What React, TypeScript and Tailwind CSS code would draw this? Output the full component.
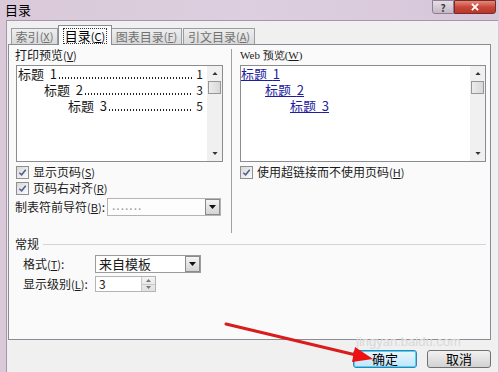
import React from "react";

function Key({ k }: { k: string }) {
  return (
    <span className="text-[11px]">
      (<span className="underline">{k}</span>)
    </span>
  );
}

function Check() {
  return (
    <span className="flex h-[13px] w-[13px] shrink-0 items-center justify-center border border-[#8e8f8f] bg-gradient-to-br from-[#d9d9d9] to-[#fbfbfb]">
      <svg viewBox="0 0 10 10" className="h-[9px] w-[9px]">
        <path d="M1.5 5.2 L4 7.6 L8.6 2" fill="none" stroke="#4b5f92" strokeWidth="1.7" />
      </svg>
    </span>
  );
}

function DropBtn() {
  return (
    <span className="flex h-full w-[15px] shrink-0 items-center justify-center border border-[#8a8a8a] bg-gradient-to-b from-[#f4f4f4] to-[#d4d4d4]">
      <svg viewBox="0 0 7 4" className="h-[4px] w-[7px]">
        <path d="M0 0h7L3.5 4z" fill="#111" />
      </svg>
    </span>
  );
}

function ScrollBar() {
  return (
    <div className="flex h-full w-[15px] shrink-0 flex-col items-center bg-[#f0f0f0]">
      <div className="flex h-[15px] w-full items-center justify-center">
        <svg viewBox="0 0 7 4" className="h-[3px] w-[6px]">
          <path d="M0 4h7L3.5 0z" fill="#333" />
        </svg>
      </div>
      <div className="h-[13px] w-[13px] border border-[#979797] bg-gradient-to-r from-[#ececec] to-[#d8d8d8]" />
      <div className="flex-1" />
      <div className="flex h-[15px] w-full items-center justify-center">
        <svg viewBox="0 0 7 4" className="h-[3px] w-[6px]">
          <path d="M0 0h7L3.5 4z" fill="#333" />
        </svg>
      </div>
    </div>
  );
}

function PrintRow({ indent, level, page }: { indent: string; level: string; page: string }) {
  return (
    <div className={`flex h-[16px] min-w-0 items-center pr-[4px] leading-[16px] ${indent}`}>
      <span className="shrink-0 whitespace-nowrap text-[13px] leading-[16px]">标题&nbsp;&nbsp;{level}</span>
      {/* dotted leader */}
      <span className="mb-[3px] ml-[1px] h-[2px] min-w-0 flex-1 self-end bg-[radial-gradient(circle,#222_0.8px,transparent_1px)] bg-[length:3px_2px]" />
      <span className="shrink-0 pl-[3px] text-[12px] leading-[16px]">{page}</span>
    </div>
  );
}

function WebRow({ indent, level }: { indent: string; level: string }) {
  return (
    <div className={`flex h-[16px] items-center ${indent}`}>
      <span className="whitespace-nowrap text-[13px] leading-[16px] text-[#1e1ea0] underline">标题&nbsp;&nbsp;{level}</span>
    </div>
  );
}

export default function App() {
  return (
    <div className="relative flex h-[372px] w-[499px] flex-col overflow-hidden bg-gradient-to-r from-[#d9c9d9] via-[#ddcfdf] to-[#d7c6da] font-['Noto_Sans_CJK_SC',sans-serif] text-[12px] text-[#1a1a1a]">
      {/* title bar */}
      <div className="flex h-[20px] shrink-0 items-start">
        <span className="pl-[5px] pt-[1px] text-[13px] leading-[17px] text-black">目录</span>
        <div className="ml-auto mr-[3px] flex">
          <span className="flex h-[14px] w-[22px] items-center justify-center rounded-bl-[3px] border border-[#8d7f90] bg-gradient-to-b from-[#e6dfe8] to-[#c3b8c6] text-[10px] font-bold text-[#3b3b3b]">
            ?
          </span>
          <span className="flex h-[14px] w-[42px] items-center justify-center rounded-br-[3px] border border-[#7a2a24] bg-gradient-to-b from-[#e08a7d] via-[#c9473a] to-[#b9362a]">
            <svg viewBox="0 0 10 9" className="h-[8px] w-[10px]">
              <path d="M1.5 1 L8.5 8 M8.5 1 L1.5 8" stroke="#fff" strokeWidth="2" />
            </svg>
          </span>
        </div>
      </div>

      {/* dialog body */}
      <div className="ml-[6px] mr-[1px] flex flex-1 flex-col border-l border-t border-[#a596a8] bg-[#f0f0f0] pl-[1px] pr-[7px]">
        {/* tabs */}
        <div className="mt-[4px] flex h-[19px] items-end pl-[3px]">
          <div className="flex h-[16px] w-[47px] items-center justify-center border border-b-0 border-[#9a9ca3] bg-gradient-to-b from-[#eeeeee] to-[#d9d9d9] text-[#707070]">
            索引<Key k="X" />
          </div>
          <div className="relative z-10 -mb-px flex h-[20px] w-[54px] items-center justify-center border border-b-0 border-[#898c95] bg-[#fbfbfb] text-[13px] text-black">
            <span className="border border-dotted border-[#333] px-[1px] leading-[14px]">
              目录<Key k="C" />
            </span>
          </div>
          <div className="flex h-[16px] w-[70px] items-center justify-center border border-b-0 border-l-0 border-[#9a9ca3] bg-gradient-to-b from-[#eeeeee] to-[#d9d9d9] text-[#707070]">
            图表目录<Key k="F" />
          </div>
          <div className="ml-[1px] flex h-[16px] w-[72px] items-center justify-center border border-b-0 border-[#9a9ca3] bg-gradient-to-b from-[#eeeeee] to-[#d9d9d9] text-[#707070]">
            引文目录<Key k="A" />
          </div>
        </div>

        {/* tab panel */}
        <div className="flex h-[296px] flex-col border border-[#898c95] bg-[#fafafa] pl-[6px] pr-[4px]">
          <div className="flex h-[188px]">
            {/* print preview */}
            <div className="flex w-[208px] flex-col pt-[3px]">
              <div className="h-[14px] leading-[14px]">
                打印预览<Key k="V" />
              </div>
              <div className="ml-[1px] mt-[3px] flex h-[97px] w-[207px] border border-[#8a8c90] bg-white">
                <div className="flex min-w-0 flex-1 flex-col">
                  <PrintRow indent="pl-[1px]" level="1" page="1" />
                  <PrintRow indent="pl-[27px]" level="2" page="3" />
                  <PrintRow indent="pl-[51px]" level="3" page="5" />
                </div>
                <ScrollBar />
              </div>
              <div className="ml-[1px] mt-[2px] flex h-[16px] items-center gap-[4px]">
                <Check />
                <span>
                  显示页码<Key k="S" />
                </span>
              </div>
              <div className="ml-[1px] flex h-[16px] items-center gap-[4px]">
                <Check />
                <span>
                  页码右对齐<Key k="R" />
                </span>
              </div>
              <div className="mt-[2px] flex h-[18px] items-center">
                <span className="w-[92px]">
                  制表符前导符<Key k="B" />:
                </span>
                <div className="flex h-[18px] w-[114px] border border-[#b4b4b4] bg-[#fdfdfd]">
                  <span className="flex-1 pl-[4px] text-[12px] leading-[12px] tracking-[1px] text-[#9a9a9a]">.......</span>
                  <DropBtn />
                </div>
              </div>
            </div>

            {/* separator */}
            <div className="ml-[8px] mt-[4px] h-[184px] w-px bg-[#a0a0a0]" />

            {/* web preview */}
            <div className="ml-[8px] flex w-[246px] flex-col pt-[3px]">
              <div className="h-[14px] font-['Liberation_Serif',serif] text-[11px] leading-[14px]">
                Web&nbsp;预览<Key k="W" />
              </div>
              <div className="mt-[3px] flex h-[97px] w-[246px] border border-[#8a8c90] bg-white">
                <div className="flex min-w-0 flex-1 flex-col">
                  <WebRow indent="pl-0" level="1" />
                  <WebRow indent="pl-[24px]" level="2" />
                  <WebRow indent="pl-[49px]" level="3" />
                </div>
                <ScrollBar />
              </div>
              <div className="mt-[2px] flex h-[16px] items-center gap-[4px]">
                <Check />
                <span>
                  使用超链接而不使用页码<Key k="H" />
                </span>
              </div>
            </div>
          </div>

          {/* general group */}
          <div className="mt-[4px] flex h-[14px] items-center gap-[4px]">
            <span className="leading-[14px]">常规</span>
            <div className="h-px flex-1 bg-[#d4d4d4]" />
          </div>
          <div className="mt-[4px] flex h-[18px] items-center pl-[8px]">
            <span className="w-[72px]">
              格式<Key k="T" />:
            </span>
            <div className="flex h-[18px] w-[106px] border border-[#9c9c9c] bg-white">
              <span className="flex-1 pl-[3px] text-[13px] leading-[16px]">来自模板</span>
              <DropBtn />
            </div>
          </div>
          <div className="mt-[3px] flex h-[16px] items-center pl-[8px]">
            <span className="w-[72px]">
              显示级别<Key k="L" />:
            </span>
            <div className="flex h-[16px] w-[61px] border border-[#b4b4b4] bg-white">
              <span className="flex-1 pl-[3px] text-[12px] leading-[14px]">3</span>
              <div className="flex w-[14px] flex-col border-l border-[#c8c8c8] bg-gradient-to-b from-[#f4f4f4] to-[#e0e0e0]">
                <div className="flex flex-1 items-center justify-center border-b border-[#c8c8c8]">
                  <svg viewBox="0 0 7 4" className="h-[3px] w-[5px]">
                    <path d="M0 4h7L3.5 0z" fill="#777" />
                  </svg>
                </div>
                <div className="flex flex-1 items-center justify-center">
                  <svg viewBox="0 0 7 4" className="h-[3px] w-[5px]">
                    <path d="M0 0h7L3.5 4z" fill="#777" />
                  </svg>
                </div>
              </div>
            </div>
          </div>
        </div>

        {/* buttons */}
        <div className="mt-[10px] flex justify-end gap-[10px]">
          <button className="flex h-[18px] w-[64px] items-center justify-center rounded-[3px] border border-[#3c7fb1] bg-gradient-to-b from-[#eaf6fd] to-[#bee6fd] text-[13px] text-black shadow-[inset_0_0_0_1px_#48d6f8]">
            确定
          </button>
          <button className="flex h-[18px] w-[64px] items-center justify-center rounded-[3px] border border-[#707070] bg-gradient-to-b from-[#f2f2f2] to-[#d2d2d2] text-[13px] text-black">
            取消
          </button>
        </div>
      </div>

      {/* watermark */}
      <span className="pointer-events-none absolute left-[356px] top-[332px] font-['Liberation_Sans',sans-serif] text-[13px] text-[#d9d9d9]">
        jingyan.baidu.com
      </span>

      {/* red annotation arrow */}
      <svg className="pointer-events-none absolute left-0 top-0" width="499" height="372" viewBox="0 0 499 372">
        <line x1="226" y1="324" x2="356" y2="355" stroke="#d91c1c" strokeWidth="3" strokeLinecap="round" />
        <polygon points="373,359 355,347 352,362" fill="#ee1111" />
      </svg>
    </div>
  );
}
